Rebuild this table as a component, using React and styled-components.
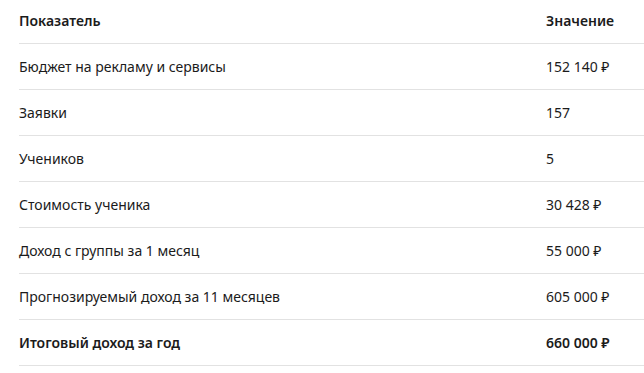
import React from "react";
import styled, { createGlobalStyle } from "styled-components";

const GlobalStyle = createGlobalStyle`
  body {
    margin: 0;
    background: #fff;
    font-family: "Noto Sans", "Open Sans", sans-serif;
    color: #1b1b1b;
  }
`;

const Wrap = styled.div`
  padding-left: 19px;
  overflow: hidden;
`;

const Table = styled.div`
  display: grid;
  grid-template-columns: 527px 1fr;
  width: 100%;
`;

const Cell = styled.div`
  box-sizing: border-box;
  height: ${(p) => (p.head ? "44px" : "46px")};
  padding-bottom: ${(p) => (p.head ? "2px" : "0")};
  display: flex;
  align-items: center;
  border-bottom: 1px solid #e2e2e2;
  font-size: 14px;
  font-weight: ${(p) => (p.bold ? 600 : 400)};
  white-space: nowrap;
`;

const rows = [
  ["Бюджет на рекламу и сервисы", "152 140 ₽"],
  ["Заявки", "157"],
  ["Учеников", "5"],
  ["Стоимость ученика", "30 428 ₽"],
  ["Доход с группы за 1 месяц", "55 000 ₽"],
  ["Прогнозируемый доход за 11 месяцев", "605 000 ₽"],
];

export default function App() {
  return (
    <>
      <GlobalStyle />
      <Wrap>
        <Table>
          <Cell head bold>Показатель</Cell>
          <Cell head bold>Значение</Cell>
          {rows.map(([name, value]) => (
            <React.Fragment key={name}>
              <Cell>{name}</Cell>
              <Cell>{value}</Cell>
            </React.Fragment>
          ))}
          <Cell bold>Итоговый доход за год</Cell>
          <Cell bold>660 000 ₽</Cell>
        </Table>
      </Wrap>
    </>
  );
}
